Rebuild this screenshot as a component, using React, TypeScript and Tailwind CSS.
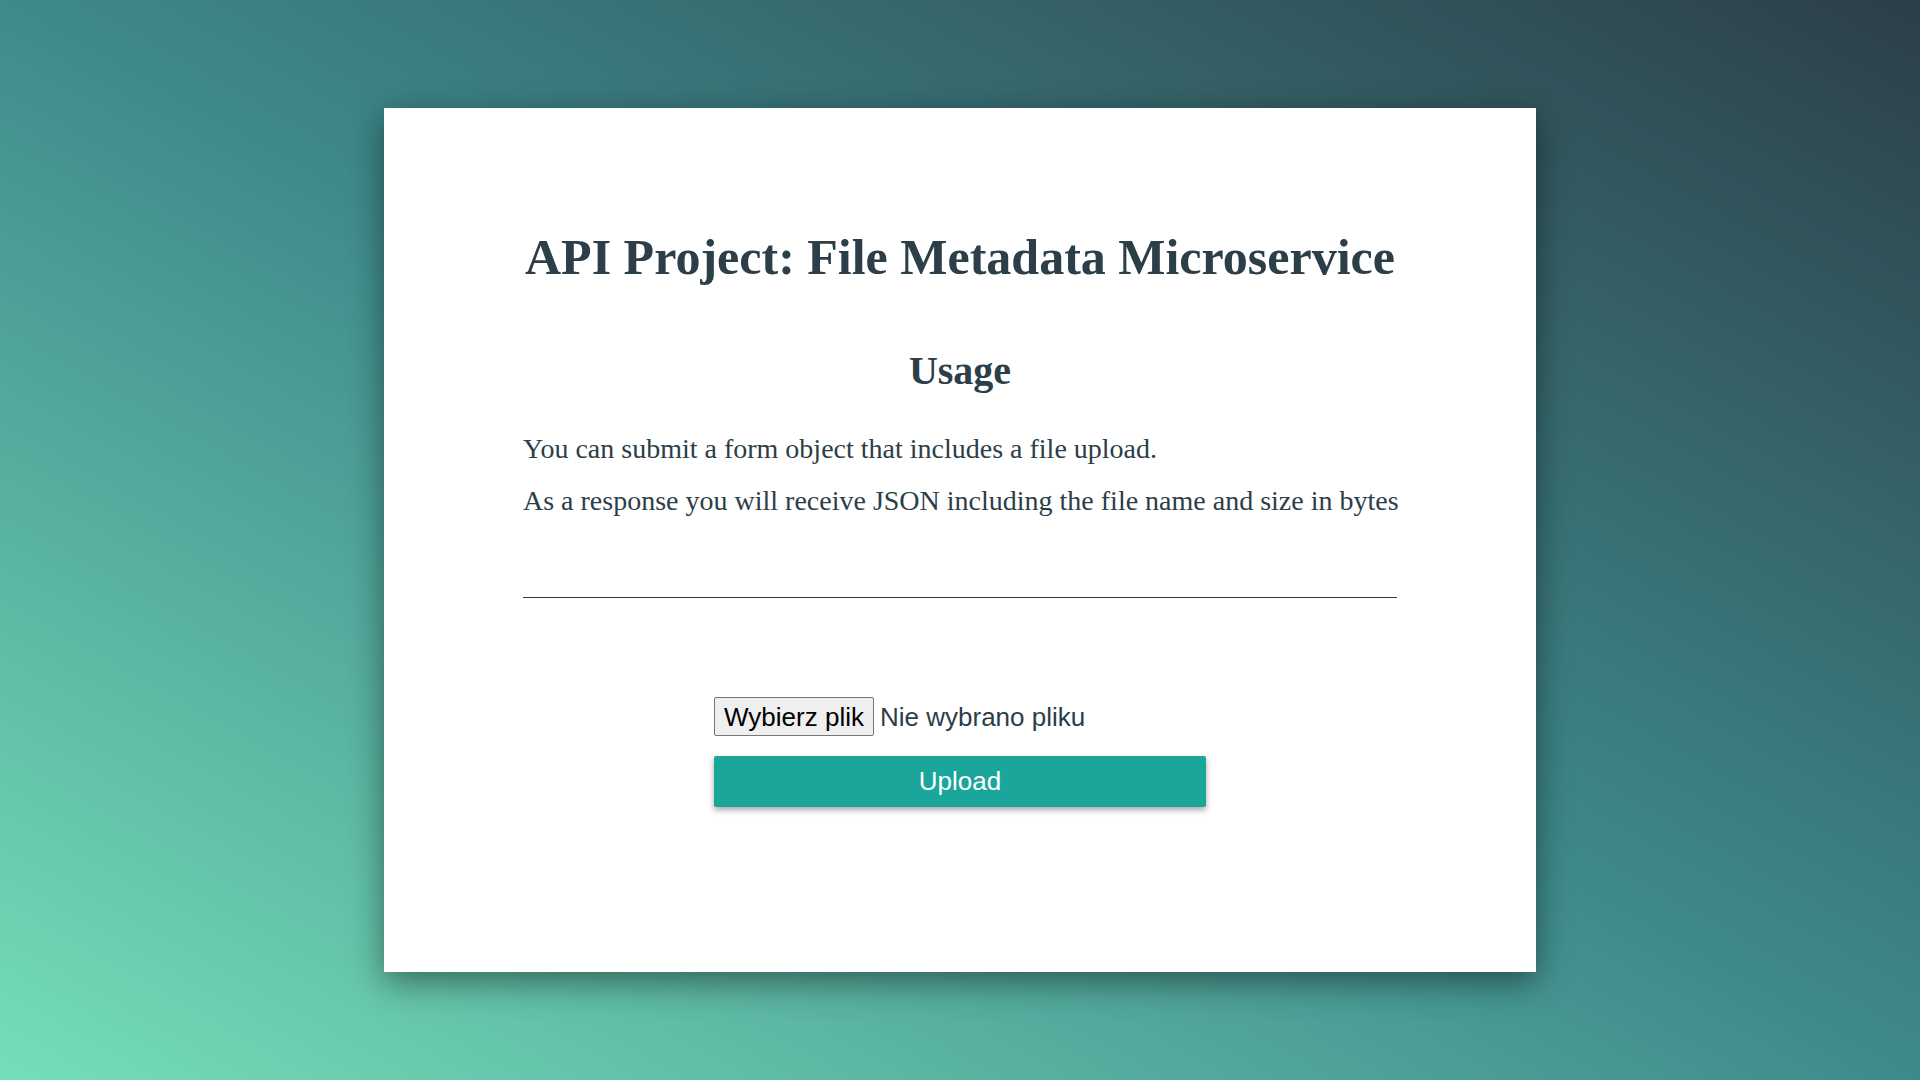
export default function App() {
  return (
    <div className="flex h-screen w-full items-center justify-center bg-[linear-gradient(to_top_right,#76deb9_0%,#3e8a8b_50%,#2c3e48_100%)]">
      <div className="flex h-[864px] w-[1152px] flex-col bg-white px-[139px] pt-[120px] text-[#2c3e48] leading-[normal] shadow-[0_10px_32px_rgba(0,0,0,0.45)] font-['Liberation_Serif','Times_New_Roman',serif]">
        {/* Header */}
        <h1 className="text-center text-[50px] font-bold">API Project: File Metadata Microservice</h1>
        <h3 className="mt-[61px] text-center text-[40px] font-bold">Usage</h3>

        <p className="mt-[39px] whitespace-nowrap text-[28px]">You can submit a form object that includes a file upload.</p>
        <p className="mt-[20px] whitespace-nowrap text-[28px]">As a response you will receive JSON including the file name and size in bytes</p>

        <hr className="mt-[80px] border-t border-[#2c3e48]" />

        {/* Form */}
        <form className="mx-auto mt-[99px] flex w-[492px] flex-col font-['Liberation_Sans',Arial,sans-serif]">
          <div className="flex items-center">
            <button
              type="button"
              className="h-[39px] w-[160px] rounded-[2px] border border-[#767676] bg-[#efefef] text-[26px] leading-none text-black"
            >
              Wybierz plik
            </button>
            <span className="ml-[6px] text-[26px] leading-none">Nie wybrano pliku</span>
          </div>
          <button
            type="submit"
            className="mt-[20px] h-[51px] w-full rounded-[2px] bg-[#1aa69a] text-[26px] text-white shadow-[0_3px_6px_rgba(0,0,0,0.35)]"
          >
            Upload
          </button>
        </form>
      </div>
    </div>
  )
}
